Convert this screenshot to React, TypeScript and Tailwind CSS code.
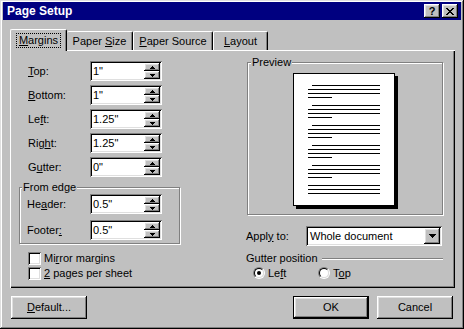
import type { ReactNode } from 'react'

const font = "font-['Liberation_Sans',Arial,sans-serif]"
const raised = 'shadow-[inset_-1px_-1px_#000,inset_1px_1px_#fff,inset_-2px_-2px_#808080,inset_2px_2px_#dfdfdf]'
const sunken = 'shadow-[inset_1px_1px_#808080,inset_-1px_-1px_#fff,inset_2px_2px_#000,inset_-2px_-2px_#dfdfdf]'
const etched = 'border border-[#808080] shadow-[inset_1px_1px_#fff,1px_1px_#fff]'

// underline the accelerator letter
function Acc({ text, at }: { text: string; at: number }) {
  return (
    <span>
      {text.slice(0, at)}
      <span className="underline underline-offset-[1px]">{text[at]}</span>
      {text.slice(at + 1)}
    </span>
  )
}

function Arrow({ up }: { up?: boolean }) {
  return (
    <svg width="5" height="3" viewBox="0 0 5 3" shapeRendering="crispEdges">
      <polygon points={up ? '2.5,0 5,3 0,3' : '0,0 5,0 2.5,3'} fill="#000" />
    </svg>
  )
}

function Spin({ value }: { value: string }) {
  return (
    <div className={`flex h-[20px] w-[72px] bg-white p-[2px] ${sunken}`}>
      <span className="flex-1 pl-[1px] leading-[16px]">{value}</span>
      <div className="flex w-[16px] flex-col">
        <div className={`flex h-[8px] items-center justify-center bg-[#c0c0c0] ${raised}`}>
          <Arrow up />
        </div>
        <div className={`flex h-[8px] items-center justify-center bg-[#c0c0c0] ${raised}`}>
          <Arrow />
        </div>
      </div>
    </div>
  )
}

function Field({ label, value, w }: { label: ReactNode; value: string; w: string }) {
  return (
    <div className="flex items-center">
      <span className={w}>{label}</span>
      <Spin value={value} />
    </div>
  )
}

function Check({ children }: { children: ReactNode }) {
  return (
    <div className="flex h-[13px] items-center gap-[3px]">
      <span className={`h-[13px] w-[13px] bg-white ${sunken}`} />
      <span>{children}</span>
    </div>
  )
}

function Radio({ checked, children, w }: { checked?: boolean; children: ReactNode; w: string }) {
  return (
    <div className={`flex h-[12px] items-center gap-[3px] ${w}`}>
      <span className="h-[12px] w-[12px] rounded-full border border-b-white border-l-[#808080] border-r-white border-t-[#808080]">
        <span className="flex h-full w-full items-center justify-center rounded-full border border-b-[#dfdfdf] border-l-black border-r-[#dfdfdf] border-t-black bg-white">
          {checked && <span className="h-[4px] w-[4px] rounded-full bg-black" />}
        </span>
      </span>
      <span>{children}</span>
    </div>
  )
}

function Button({ children, def }: { children: ReactNode; def?: boolean }) {
  return (
    <div
      className={`flex h-[23px] w-[76px] items-center justify-center bg-[#c0c0c0] ${
        def ? 'border border-black' : ''
      } ${raised}`}
    >
      {children}
    </div>
  )
}

const previewLines: [number, number, number][] = [
  [18, 86, 11], [14, 86, 15], [14, 86, 19], [14, 38, 23],
  [18, 86, 31], [14, 86, 35], [14, 86, 39], [14, 38, 43],
  [18, 86, 51], [14, 86, 55], [14, 86, 59], [14, 38, 63],
  [18, 86, 71], [14, 86, 75], [14, 86, 79], [14, 38, 83],
  [18, 86, 91], [14, 86, 95], [14, 86, 99], [14, 38, 103],
  [14, 86, 111], [14, 86, 115], [14, 86, 119],
]

export default function App() {
  return (
    <div
      className={`flex h-[329px] w-[464px] flex-col bg-[#c0c0c0] px-[3px] pt-[2px] text-[11px] leading-[13px] text-black ${font} shadow-[inset_-1px_-1px_#000,inset_1px_1px_#dfdfdf,inset_-2px_-2px_#808080,inset_2px_2px_#fff]`}
    >
      {/* title bar */}
      <div className="flex h-[18px] items-center justify-between bg-[#000080] pl-[4px] pr-[3px]">
        <span className="text-[12px] font-bold text-white">Page Setup</span>
        <div className="flex gap-[2px]">
          <div className={`flex h-[14px] w-[16px] items-center justify-center bg-[#c0c0c0] text-[11px] font-bold ${raised}`}>
            ?
          </div>
          <div className={`flex h-[14px] w-[16px] items-center justify-center bg-[#c0c0c0] ${raised}`}>
            <svg width="8" height="7" viewBox="0 0 8 7" shapeRendering="crispEdges">
              <path d="M0 0h2l2 2.2L6 0h2L5 3.5 8 7H6L4 4.8 2 7H0l3-3.5z" fill="#000" />
            </svg>
          </div>
        </div>
      </div>

      <div className="ml-[7px] mt-[9px] w-[445px]">
        {/* tabs */}
        <div className="flex h-[21px] items-end">
          <div className="relative z-10 -mb-px flex h-[22px] w-[57px] items-center justify-center rounded-t-[2px] border-l border-r border-t border-l-white border-r-black border-t-white bg-[#c0c0c0] pb-[1px] shadow-[inset_-1px_0_#808080]">
            <span className="border border-dotted border-black px-[2px] leading-[13px]">
              <Acc text="Margins" at={0} />
            </span>
          </div>
          <div className="flex h-[19px] w-[66px] items-center justify-center rounded-t-[2px] border-r border-t border-r-black border-t-white shadow-[inset_-1px_0_#808080]">
            <Acc text="Paper Size" at={6} />
          </div>
          <div className="flex h-[19px] w-[80px] items-center justify-center rounded-t-[2px] border-l border-r border-t border-l-white border-r-black border-t-white shadow-[inset_-1px_0_#808080]">
            <Acc text="Paper Source" at={0} />
          </div>
          <div className="flex h-[19px] w-[55px] items-center justify-center rounded-t-[2px] border-l border-r border-t border-l-white border-r-black border-t-white shadow-[inset_-1px_0_#808080]">
            <Acc text="Layout" at={0} />
          </div>
        </div>

        {/* tab page */}
        <div className="flex h-[238px] justify-between bg-[#c0c0c0] shadow-[inset_1px_1px_#fff,inset_-1px_-1px_#000,inset_-2px_-2px_#808080]">
          <div className="flex flex-col pl-[9px] pt-[11px]">
            <div className="flex flex-col gap-[4px] pl-[9px]">
              <Field label={<Acc text="Top:" at={0} />} value={'1"'} w="w-[62px]" />
              <Field label={<Acc text="Bottom:" at={0} />} value={'1"'} w="w-[62px]" />
              <Field label={<Acc text="Left:" at={2} />} value={'1.25"'} w="w-[62px]" />
              <Field label={<Acc text="Right:" at={3} />} value={'1.25"'} w="w-[62px]" />
              <Field label={<Acc text="Gutter:" at={1} />} value={'0"'} w="w-[62px]" />
            </div>

            <div className={`relative mt-[10px] h-[57px] w-[161px] ${etched}`}>
              <span className="absolute -top-[7px] left-[2px] bg-[#c0c0c0] px-[1px]">From edge</span>
              <div className="flex flex-col gap-[6px] pl-[7px] pt-[6px]">
                <Field label={<Acc text="Header:" at={2} />} value={'0.5"'} w="w-[63px]" />
                <Field label={<Acc text="Footer:" at={6} />} value={'0.5"'} w="w-[63px]" />
              </div>
            </div>

            <div className="mt-[8px] flex flex-col gap-[2px] pl-[9px]">
              <Check>
                <Acc text="Mirror margins" at={2} />
              </Check>
              <Check>
                <Acc text="2 pages per sheet" at={0} />
              </Check>
            </div>
          </div>

          <div className="mr-[12px] flex w-[197px] flex-col pt-[12px]">
            <div className={`relative ml-[1px] h-[153px] w-[196px] ${etched}`}>
              <span className="absolute -top-[7px] left-[3px] bg-[#c0c0c0] px-[1px]">Preview</span>
              <div className="ml-[45px] mt-[10px] h-[133px] w-[102px] border border-black bg-white shadow-[3px_3px_0_#000]">
                <svg width="100" height="131" viewBox="0 0 100 131" shapeRendering="crispEdges">
                  {previewLines.map(([x1, x2, y], i) => (
                    <rect key={i} x={x1} y={y} width={x2 - x1} height={1} fill="#000" />
                  ))}
                </svg>
              </div>
            </div>

            <div className="mt-[11px] flex items-center">
              <span className="w-[60px]">
                <Acc text="Apply to:" at={4} />
              </span>
              <div className={`flex h-[20px] w-[136px] bg-white p-[2px] ${sunken}`}>
                <span className="flex-1 pl-[2px] leading-[16px]">Whole document</span>
                <div className={`flex h-[16px] w-[16px] items-center justify-center bg-[#c0c0c0] ${raised}`}>
                  <svg width="7" height="4" viewBox="0 0 7 4" shapeRendering="crispEdges">
                    <polygon points="0,0 7,0 3.5,4" fill="#000" />
                  </svg>
                </div>
              </div>
            </div>

            <div className="mt-[6px] flex items-center gap-[4px]">
              <span>Gutter position</span>
              <span className="h-[2px] flex-1 border-b border-t border-b-white border-t-[#808080]" />
            </div>

            <div className="mt-[2px] flex pl-[7px]">
              <Radio checked w="w-[65px]">
                <Acc text="Left" at={2} />
              </Radio>
              <Radio w="w-[60px]">
                <Acc text="Top" at={1} />
              </Radio>
            </div>
          </div>
        </div>

        {/* buttons */}
        <div className="mt-[8px] flex items-center">
          <div className="ml-[1px]">
            <Button>
              <Acc text="Default..." at={0} />
            </Button>
          </div>
          <div className="ml-auto flex gap-[8px] pr-[2px]">
            <Button def>OK</Button>
            <Button>Cancel</Button>
          </div>
        </div>
      </div>
    </div>
  )
}
